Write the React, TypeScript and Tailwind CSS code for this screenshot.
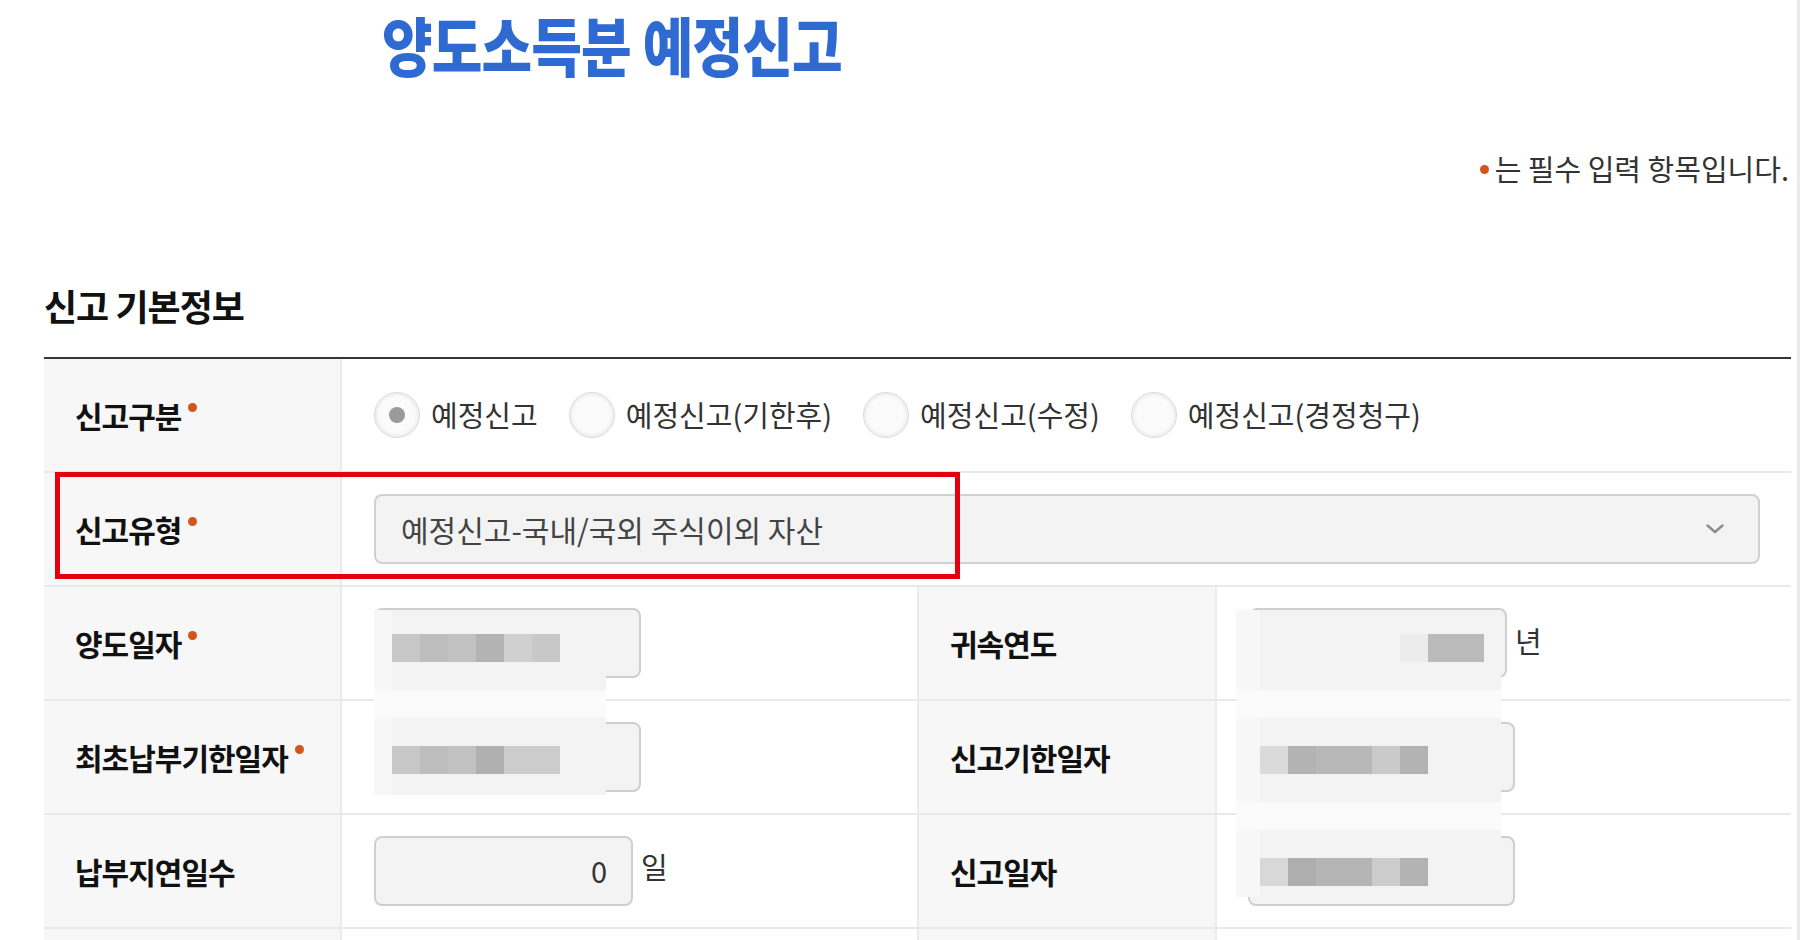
import React from "react";

const F = "bg-[#f3f3f3]";
const W = "bg-[#fbfbfb]";
const L = "bg-[#f7f7f7]";

type MosaicRow = { h: string; cells: string[] };

// blurred (pixelated) values on the date fields
const leftMosaic: MosaicRow[] = [
    { h: "h-[24px]", cells: [L, F, F, F, F, F, F, F] },
    { h: "h-[28px]", cells: [L, "bg-[#c8c8c8]", "bg-[#bdbdbd]", "bg-[#c2c2c2]", "bg-[#b3b3b3]", "bg-[#d0d0d0]", "bg-[#c8c8c8]", F] },
    { h: "h-[28px]", cells: [L, F, F, F, F, F, F, F] },
    { h: "h-[28px]", cells: [W, W, W, W, W, W, W, W] },
    { h: "h-[28px]", cells: [L, F, F, F, F, F, F, F] },
    { h: "h-[28px]", cells: [L, "bg-[#c8c8c8]", "bg-[#bdbdbd]", "bg-[#c2c2c2]", "bg-[#b0b0b0]", "bg-[#cccccc]", "bg-[#cccccc]", F] },
    { h: "h-[21px]", cells: [L, F, F, F, F, F, F, F] },
];

const rightMosaic: MosaicRow[] = [
    { h: "h-[24px]", cells: [L, F, F, F, F, F, F, F, F, F] },
    { h: "h-[28px]", cells: [L, F, F, F, F, F, "bg-[#ececec]", "bg-[#bbbbbb]", "bg-[#bbbbbb]", F] },
    { h: "h-[28px]", cells: [L, F, F, F, F, F, F, F, F, F] },
    { h: "h-[28px]", cells: [W, W, W, W, W, W, W, W, W, W] },
    { h: "h-[28px]", cells: [L, F, F, F, F, F, F, F, F, F] },
    { h: "h-[28px]", cells: [L, "bg-[#dadada]", "bg-[#b3b3b3]", "bg-[#b8b8b8]", "bg-[#b8b8b8]", "bg-[#cacaca]", "bg-[#b3b3b3]", F, F, F] },
    { h: "h-[28px]", cells: [L, F, F, F, F, F, F, F, F, F] },
    { h: "h-[28px]", cells: [W, W, W, W, W, W, W, W, W, W] },
    { h: "h-[28px]", cells: [L, F, F, F, F, F, F, F, F, F] },
    { h: "h-[28px]", cells: [L, "bg-[#d8d8d8]", "bg-[#aeaeae]", "bg-[#b5b5b5]", "bg-[#b5b5b5]", "bg-[#cccccc]", "bg-[#b3b3b3]", F, F, F] },
    { h: "h-[11px]", cells: [L, F, F, F, F, F, F, F, F, F] },
];

function Mosaic({ rows, lead, className }: { rows: MosaicRow[]; lead: string; className: string }) {
    return (
        <div className={"absolute flex flex-col " + className}>
            {rows.map((r, i) => (
                <div key={i} className={"flex " + r.h}>
                    {r.cells.map((c, j) => (
                        <div
                            key={j}
                            className={c + " " + (j === 0 ? lead : j === r.cells.length - 1 ? "flex-1" : "w-[28px]")}
                        />
                    ))}
                </div>
            ))}
        </div>
    );
}

function Dot() {
    return <span className="ml-[7px] mb-[16px] w-[9px] h-[9px] rounded-full bg-[#d4541c]" />;
}

function Label({ text, req, left }: { text: string; req?: boolean; left?: boolean }) {
    return (
        <div
            className={
                "flex items-center bg-[#f7f7f7] pl-[31px] border-r-2 border-[#ebebeb] " +
                (left ? "border-l-2" : "")
            }
        >
            <span className="text-[30px] font-bold text-[#111] tracking-[-1px]">{text}</span>
            {req && <Dot />}
        </div>
    );
}

function Field({ value, align, className }: { value?: string; align?: string; className: string }) {
    return (
        <div
            className={
                "h-[70px] rounded-[8px] border-2 border-[#cfcfcf] bg-[#f3f3f3] flex items-center px-[24px] text-[29px] text-[#333] " +
                (align === "right" ? "justify-end " : "") +
                className
            }
        >
            {value}
        </div>
    );
}

function Radio({ label, checked }: { label: string; checked?: boolean }) {
    return (
        <label className="flex items-center gap-[11px]">
            <span className="w-[46px] h-[46px] rounded-full border border-[#dadada] bg-[#fbfbfb] shadow-[inset_0_0_5px_rgba(0,0,0,0.12)] flex items-center justify-center">
                {checked && <span className="w-[16px] h-[16px] rounded-full bg-[#9a9a9a]" />}
            </span>
            <span className="text-[29px] text-[#333]">{label}</span>
        </label>
    );
}

export default function App() {
    const row = "h-[114px] border-b-2 border-[#e9e9e9]";
    return (
        <div className="w-[1800px] min-h-[940px] bg-white font-['Noto_Sans_CJK_KR','Noto_Sans',sans-serif] flex">
            <div className="w-[1797px] flex flex-col">
                <div className="h-[86px] flex items-center pl-[382px]">
                    <h1 className="inline-block origin-left scale-x-[0.86] text-[64px] leading-none font-black text-[#2e6ad1] tracking-[-1px]">
                        양도소득분 예정신고
                    </h1>
                </div>

                <div className="h-[166px] flex items-center justify-end pr-[8px]">
                    <span className="w-[9px] h-[9px] rounded-full bg-[#d4541c] mr-[6px]" />
                    <span className="text-[29px] text-[#333]">는 필수 입력 항목입니다.</span>
                </div>

                <div className="h-[105px] flex items-center pl-[44px]">
                    <h2 className="text-[36px] font-bold text-[#111] tracking-[-1px]">신고 기본정보</h2>
                </div>

                <div className="relative ml-[44px] mr-[6px] border-t-2 border-[#33343c]">
                    <div className={"grid grid-cols-[298px_1fr] " + row}>
                        <Label text="신고구분" req />
                        <div className="flex items-center gap-[31px] pl-[32px]">
                            <Radio label="예정신고" checked />
                            <Radio label="예정신고(기한후)" />
                            <Radio label="예정신고(수정)" />
                            <Radio label="예정신고(경정청구)" />
                        </div>
                    </div>

                    <div className={"grid grid-cols-[298px_1fr] " + row}>
                        <Label text="신고유형" req />
                        <div className="flex items-center pl-[32px] pr-[31px]">
                            <div className="flex-1 h-[70px] rounded-[8px] border-2 border-[#d0d0d0] bg-[#f3f3f3] flex items-center justify-between pl-[25px] pr-[34px]">
                                <span className="text-[30px] text-[#444]">예정신고-국내/국외 주식이외 자산</span>
                                <svg width="18" height="10" viewBox="0 0 18 10" fill="none">
                                    <polyline points="1.5,1.5 9,8 16.5,1.5" stroke="#8c8c8c" strokeWidth="2.4" strokeLinecap="round" strokeLinejoin="round" />
                                </svg>
                            </div>
                        </div>
                    </div>

                    <div className={"grid grid-cols-[298px_575px_300px_1fr] " + row}>
                        <Label text="양도일자" req />
                        <div className="flex items-center pl-[32px]">
                            <Field className="w-[267px]" />
                        </div>
                        <Label text="귀속연도" left />
                        <div className="flex items-center gap-[8px] pl-[32px]">
                            <Field className="w-[258px]" />
                            <span className="text-[29px] text-[#333] mb-[4px]">년</span>
                        </div>
                    </div>

                    <div className={"grid grid-cols-[298px_575px_300px_1fr] " + row}>
                        <Label text="최초납부기한일자" req />
                        <div className="flex items-center pl-[32px]">
                            <Field className="w-[267px]" />
                        </div>
                        <Label text="신고기한일자" left />
                        <div className="flex items-center pl-[32px]">
                            <Field className="w-[266px]" />
                        </div>
                    </div>

                    <div className={"grid grid-cols-[298px_575px_300px_1fr] " + row}>
                        <Label text="납부지연일수" />
                        <div className="flex items-center gap-[8px] pl-[32px]">
                            <Field className="w-[259px]" value="0" align="right" />
                            <span className="text-[29px] text-[#333] mb-[8px]">일</span>
                        </div>
                        <Label text="신고일자" left />
                        <div className="flex items-center pl-[31px]">
                            <Field className="w-[267px]" />
                        </div>
                    </div>

                    <div className={"grid grid-cols-[298px_575px_300px_1fr] " + row}>
                        <Label text="" />
                        <div />
                        <Label text="" left />
                        <div />
                    </div>

                    {/* red highlight around 신고유형 */}
                    <div className="absolute left-[11px] top-[113px] w-[905px] h-[107px] border-[5px] border-[#e5000f] pointer-events-none" />

                    <Mosaic rows={leftMosaic} lead="w-[18px]" className="left-[330px] top-[251px] w-[232px]" />
                    <Mosaic rows={rightMosaic} lead="w-[24px]" className="left-[1192px] top-[251px] w-[265px]" />
                </div>
            </div>
            <div className="w-[3px] bg-[#ebebeb]" />
        </div>
    );
}
